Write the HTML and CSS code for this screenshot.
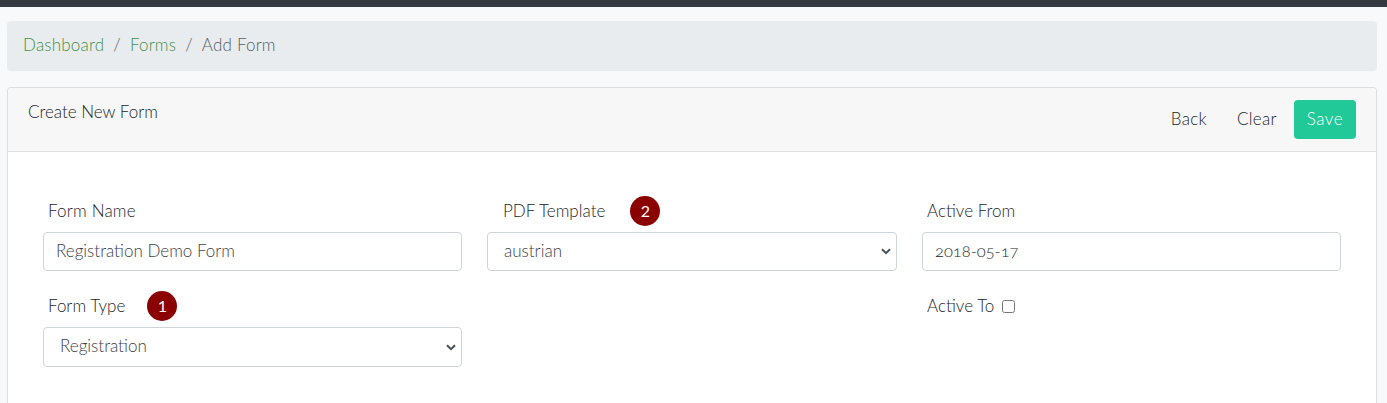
FILE: index.html
```html
<!DOCTYPE html>
<html lang="en">
<head>
<meta charset="utf-8">
<title>Add Form</title>
<link rel="stylesheet" href="styles.css">
</head>
<body>
<div class="topbar"></div>
<main class="page">
  <nav class="breadcrumb">
    <a href="#">Dashboard</a><span class="sep">/</span><a href="#">Forms</a><span class="sep">/</span><span class="current">Add Form</span>
  </nav>
  <section class="card">
    <header class="card-header">
      <h1 class="card-title">Create New Form</h1>
      <div class="actions">
        <button class="btn" type="button">Back</button>
        <button class="btn" type="button">Clear</button>
        <button class="btn btn-save" type="button">Save</button>
      </div>
    </header>
    <form class="card-body">
      <div class="col col-left">
        <div class="field">
          <label class="label label-wide">Form Name</label>
          <input class="control" type="text" value="Registration Demo Form">
        </div>
        <div class="field field-second">
          <label class="label">Form Type<span class="badge badge-one">1</span></label>
          <select class="control select tall"><option>Registration</option></select>
        </div>
      </div>
      <div class="col col-mid">
        <div class="field">
          <label class="label label-pdf">PDF Template<span class="badge badge-two">2</span></label>
          <select class="control select"><option>austrian</option></select>
        </div>
      </div>
      <div class="col col-right">
        <div class="field">
          <label class="label">Active From</label>
          <input class="control date" type="text" value="2018-05-17">
        </div>
        <div class="field field-second">
          <label class="label">Active To<input class="check" type="checkbox"></label>
        </div>
      </div>
    </form>
  </section>
</main>
</body>
</html>
```
FILE: styles.css
```css
* { box-sizing: border-box; }
html, body { margin: 0; height: 403px; overflow: hidden; }
body {
  background: #f8f9fa;
  color: #212529;
  font-family: "Lato", "Open Sans", sans-serif;
  font-size: 17px;
  font-weight: 300;
  line-height: 24px;
}
.topbar { height: 7px; background: #343a40; }
.page { padding: 14px 10px 0 7px; }
.breadcrumb {
  display: flex;
  align-items: center;
  height: 50px;
  padding: 0 16px 2px;
  background: #e9ecef;
  border-radius: 4px;
  margin-bottom: 16px;
  letter-spacing: 0.2px;
}
.breadcrumb a { color: #3f9146; text-decoration: none; }
.sep { color: #555d65; padding: 0 9px; }
.current { color: #555d65; }
.card {
  background: #fff;
  border: 1px solid #dfdfdf;
  border-bottom: 0;
  border-radius: 4px 4px 0 0;
  height: 316px;
}
.card-header {
  display: flex;
  justify-content: space-between;
  height: 64px;
  padding: 12px 20px;
  background: #f7f7f7;
  border-bottom: 1px solid #dfdfdf;
  border-radius: 3px 3px 0 0;
}
.card-title { margin: 0; font-size: 17px; font-weight: 300; line-height: 24px; }
.actions { display: flex; align-items: flex-start; }
.btn {
  height: 39px;
  padding: 0 13px 2px;
  margin-left: 4px;
  border: 0;
  border-radius: 4px;
  background: transparent;
  color: #212529;
  font: inherit;
  letter-spacing: 0.3px;
}
.btn-save { background: #20c997; color: #fff; letter-spacing: 0.5px; }
.card-body {
  display: grid;
  grid-template-columns: 419px 410px 419px;
  column-gap: 25px;
  padding: 44px 35px 0;
}
.field { display: flex; flex-direction: column; }
.field-second { margin-top: 20px; }
.label {
  display: flex;
  align-items: center;
  height: 30px;
  margin-bottom: 6px;
  padding-left: 5px;
}
.label-wide { letter-spacing: 0.2px; }
.label-pdf { padding-left: 16px; }
.badge {
  display: flex;
  align-items: center;
  justify-content: center;
  width: 30px;
  height: 30px;
  border-radius: 50%;
  background: #8b0000;
  color: #fff;
  font-size: 16px;
  font-weight: 400;
}
.badge-one { margin-left: 22px; }
.badge-two { margin-left: 25px; }
.control {
  display: block;
  width: 100%;
  height: 39px;
  padding: 0 12px 2px;
  border: 1px solid #ced4da;
  border-radius: 4px;
  background-color: #fff;
  color: #3a4149;
  font: inherit;
  outline: 0;
}
.select {
  appearance: none;
  -webkit-appearance: none;
  padding-left: 16px;
  background-image: url("data:image/svg+xml,%3Csvg xmlns='http://www.w3.org/2000/svg' width='10' height='7' viewBox='0 0 10 7'%3E%3Cpath d='M1 1.2l4 4 4-4' fill='none' stroke='%23495057' stroke-width='2'/%3E%3C/svg%3E");
  background-repeat: no-repeat;
  background-position: right 5px center;
}
.date { font-size: 16.5px; color: #212529; font-variant-numeric: oldstyle-nums; }
.tall { height: 40px; padding-bottom: 3px; }
.check { width: 13px; height: 13px; margin: 0 0 0 8px; }
```
